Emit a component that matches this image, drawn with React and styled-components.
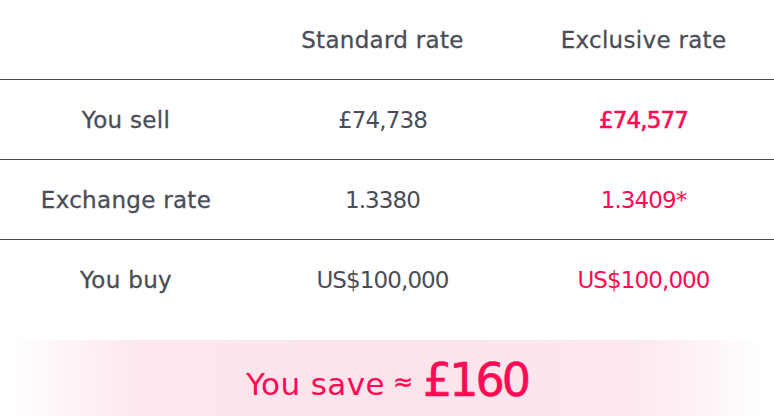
import React from 'react'
import styled, { createGlobalStyle } from 'styled-components'

const GlobalStyle = createGlobalStyle`
  html, body {
    margin: 0;
    padding: 0;
    background: #fff;
  }
  body {
    font-family: "DejaVu Sans", "Open Sans", sans-serif;
    color: #4a4d56;
  }
`

const Wrapper = styled.div`
  width: 774px;
  height: 416px;
  overflow: hidden;
  display: flex;
  flex-direction: column;
`

const Row = styled.div`
  display: grid;
  grid-template-columns: 252px 1fr 1fr;
  align-items: center;
  height: 80px;
  border-bottom: ${p => (p.$line ? '1px solid #4a4d55' : 'none')};
  box-sizing: border-box;
`

// DejaVu has no medium weight, so a thin stroke stands in for it
const Cell = styled.div`
  text-align: center;
  font-size: 23px;
  letter-spacing: ${p => (p.$value ? '-0.9px' : '0.3px')};
  color: ${p => (p.$pink ? '#ff0a54' : '#4a4d56')};
  -webkit-text-stroke: ${p => p.$stroke || 0}px currentColor;
`

const SaveBox = styled.div`
  margin: 20px 10px 0;
  height: 76px;
  display: flex;
  align-items: center;
  justify-content: center;
  padding-top: 4px;
  box-sizing: border-box;
  color: #ff0a54;
  background: linear-gradient(90deg, rgba(253, 228, 236, 0) 0%, #fde6ee 18%, #fde4ec 50%, #fde6ee 82%, rgba(253, 228, 236, 0) 100%);
`

const SaveLabel = styled.span`
  font-size: 31px;
  letter-spacing: 0.4px;
  margin-top: 8px;
`

const Approx = styled.span`
  font-size: 24px;
  margin: 4px 10px 0 8px;
  -webkit-text-stroke: 0.4px currentColor;
`

const SaveAmount = styled.span`
  font-size: 46px;
  letter-spacing: -3px;
  -webkit-text-stroke: 0.6px currentColor;
`

const rows = [
  { label: 'You sell', std: '£74,738', exc: '£74,577', bold: true, line: true },
  { label: 'Exchange rate', std: '1.3380', exc: '1.3409*', line: true },
  { label: 'You buy', std: 'US$100,000', exc: 'US$100,000' },
]

export default function App() {
  return (
    <Wrapper>
      <GlobalStyle />
      <Row $line>
        <Cell />
        <Cell $stroke={0.3}>Standard rate</Cell>
        <Cell $stroke={0.3}>Exclusive rate</Cell>
      </Row>
      {rows.map(r => (
        <Row key={r.label} $line={r.line}>
          <Cell $stroke={0.3}>{r.label}</Cell>
          <Cell $value>{r.std}</Cell>
          <Cell $value $pink $stroke={r.bold ? 0.6 : 0}>{r.exc}</Cell>
        </Row>
      ))}
      <SaveBox>
        <SaveLabel>You save</SaveLabel>
        <Approx>≈</Approx>
        <SaveAmount>£160</SaveAmount>
      </SaveBox>
    </Wrapper>
  )
}
